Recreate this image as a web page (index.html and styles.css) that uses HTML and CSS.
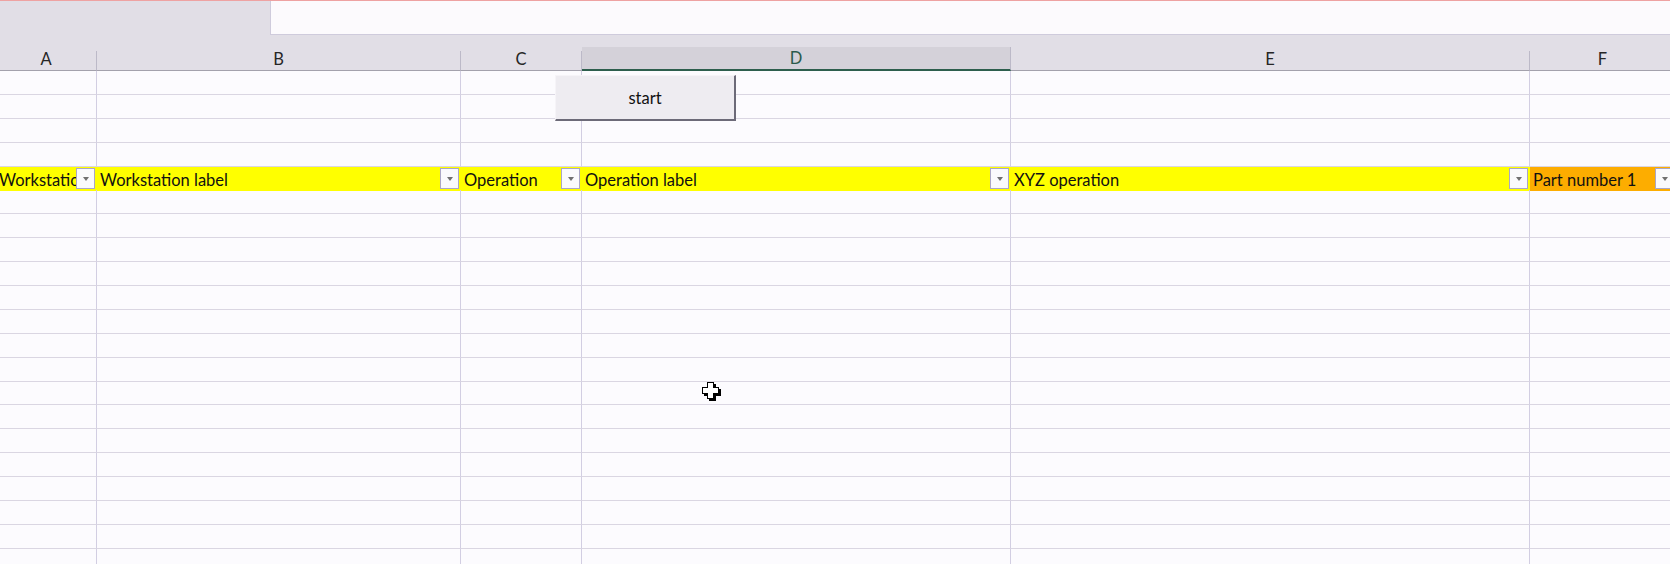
FILE: index.html
```html
<!DOCTYPE html>
<html>
<head>
<meta charset="utf-8">
<link rel="stylesheet" href="styles.css">
</head>
<body>
<div class="app">
  <div class="topbar">
    <div class="namebox"></div>
    <div class="formula"></div>
  </div>
  <div class="sheet">
    <div class="cols colheads">
      <div class="ch">A</div>
      <div class="ch">B</div>
      <div class="ch">C</div>
      <div class="ch sel">D</div>
      <div class="ch">E</div>
      <div class="ch">F</div>
    </div>
    <div class="body">
      <div class="cols row"><div class="c"></div><div class="c"></div><div class="c"></div><div class="c"></div><div class="c"></div><div class="c"></div></div>
      <div class="cols row"><div class="c"></div><div class="c"></div><div class="c"></div><div class="c"></div><div class="c"></div><div class="c"></div></div>
      <div class="cols row"><div class="c"></div><div class="c"></div><div class="c"></div><div class="c"></div><div class="c"></div><div class="c"></div></div>
      <div class="cols row"><div class="c"></div><div class="c"></div><div class="c"></div><div class="c"></div><div class="c"></div><div class="c"></div></div>
      <div class="cols row hrow">
        <div class="c hc"><span class="t">Workstation</span><span class="fb"></span></div>
        <div class="c hc"><span class="t">Workstation label</span><span class="fb"></span></div>
        <div class="c hc"><span class="t">Operation</span><span class="fb"></span></div>
        <div class="c hc"><span class="t">Operation label</span><span class="fb"></span></div>
        <div class="c hc"><span class="t">XYZ operation</span><span class="fb"></span></div>
        <div class="c hc orange"><span class="t">Part number 1</span><span class="fb"></span></div>
      </div>
      <div class="cols row"><div class="c"></div><div class="c"></div><div class="c"></div><div class="c"></div><div class="c"></div><div class="c"></div></div>
      <div class="cols row"><div class="c"></div><div class="c"></div><div class="c"></div><div class="c"></div><div class="c"></div><div class="c"></div></div>
      <div class="cols row"><div class="c"></div><div class="c"></div><div class="c"></div><div class="c"></div><div class="c"></div><div class="c"></div></div>
      <div class="cols row"><div class="c"></div><div class="c"></div><div class="c"></div><div class="c"></div><div class="c"></div><div class="c"></div></div>
      <div class="cols row"><div class="c"></div><div class="c"></div><div class="c"></div><div class="c"></div><div class="c"></div><div class="c"></div></div>
      <div class="cols row"><div class="c"></div><div class="c"></div><div class="c"></div><div class="c"></div><div class="c"></div><div class="c"></div></div>
      <div class="cols row"><div class="c"></div><div class="c"></div><div class="c"></div><div class="c"></div><div class="c"></div><div class="c"></div></div>
      <div class="cols row"><div class="c"></div><div class="c"></div><div class="c"></div><div class="c"></div><div class="c"></div><div class="c"></div></div>
      <div class="cols row"><div class="c"></div><div class="c"></div><div class="c"></div><div class="c"></div><div class="c"></div><div class="c"></div></div>
      <div class="cols row"><div class="c"></div><div class="c"></div><div class="c"></div><div class="c"></div><div class="c"></div><div class="c"></div></div>
      <div class="cols row"><div class="c"></div><div class="c"></div><div class="c"></div><div class="c"></div><div class="c"></div><div class="c"></div></div>
      <div class="cols row"><div class="c"></div><div class="c"></div><div class="c"></div><div class="c"></div><div class="c"></div><div class="c"></div></div>
      <div class="cols row"><div class="c"></div><div class="c"></div><div class="c"></div><div class="c"></div><div class="c"></div><div class="c"></div></div>
      <div class="cols row"><div class="c"></div><div class="c"></div><div class="c"></div><div class="c"></div><div class="c"></div><div class="c"></div></div>
      <div class="cols row"><div class="c"></div><div class="c"></div><div class="c"></div><div class="c"></div><div class="c"></div><div class="c"></div></div>
      <div class="cols row"><div class="c"></div><div class="c"></div><div class="c"></div><div class="c"></div><div class="c"></div><div class="c"></div></div>
    </div>
  </div>
  <button class="startbtn">start</button>
  <svg class="cursor" width="19" height="19" viewBox="0 0 19 19" shape-rendering="crispEdges">
    <path d="M7 2h7v5h5v7h-5v5h-7v-5h-5v-7h5z" fill="#000"/>
    <path d="M5 0h7v5h5v7h-5v5h-7v-5h-5v-7h5z" fill="#000"/>
    <path d="M6 1h5v5h5v5h-5v5h-5v-5h-5v-5h5z" fill="#fff"/>
  </svg>
</div>
</body>
</html>
```

FILE: styles.css
```css
html, body {
  margin: 0;
  padding: 0;
  height: 100%;
  overflow: hidden;
  background: #fcfbfe;
  font-family: Lato, "Liberation Sans", sans-serif;
}

.app {
  position: relative;
  width: 1670px;
  height: 564px;
  overflow: hidden;
}

.topbar {
  height: 35px;
  box-sizing: border-box;
  display: flex;
  border-top: 1px solid #eea2a2;
  background: #e1dee6;
}

.namebox {
  width: 270px;
}

.formula {
  flex: 1;
  background: #fcfafd;
  border-left: 1px solid #cfcbdc;
  border-bottom: 1px solid #cfcbdc;
}

.sheet {
  margin-left: -4px;
  width: 1740px;
}

.cols {
  display: grid;
  grid-template-columns: 101px 364px 121px 429px 519px 146px;
}

.colheads {
  height: 36px;
  background: #e1dee6;
  align-items: end;
}

.ch {
  height: 20px;
  box-sizing: border-box;
  border-bottom: 1px solid #a3a1ac;
  border-right: 1px solid #bcb9c8;
  text-align: center;
  font-size: 16.5px;
  line-height: 17px;
  color: #262626;
}

.ch.sel {
  height: 24px;
  background: #d4d1d9;
  border-bottom: 2px solid #2d5e4d;
  color: #2a5a4c;
  line-height: 22px;
}

.row {
  height: 23.9px;
}

.c {
  box-sizing: border-box;
  border-right: 1px solid #d2cee2;
  border-bottom: 1px solid #dad6e2;
}

.hrow .c {
  background: #ffff00;
  border-right-color: #ffff00;
  border-bottom-color: #ffff00;
}

.hrow .c.orange {
  background: #fdad00;
  border-right-color: #fdad00;
  border-bottom-color: #fdad00;
}

.hc {
  display: flex;
  align-items: center;
  padding-left: 3px;
  padding-right: 1px;
  font-size: 16.5px;
  color: #111;
}

.hc .t {
  flex: 1;
  min-width: 0;
  overflow: hidden;
  white-space: nowrap;
  padding-top: 3px;
}

.fb {
  flex: none;
  width: 19px;
  height: 21px;
  margin-top: 1px;
  box-sizing: border-box;
  border: 1px solid #aaa6c6;
  background: #fafafc;
  display: flex;
  align-items: center;
  justify-content: center;
}

.fb::after {
  content: "";
  display: block;
  border-left: 3.5px solid transparent;
  border-right: 3.5px solid transparent;
  border-top: 4px solid #707070;
}

.startbtn {
  position: absolute;
  left: 555px;
  top: 75px;
  width: 181px;
  height: 46px;
  box-sizing: border-box;
  margin: 0;
  padding: 0;
  background: #eeecf1;
  border-top: 1px solid #f6f4f8;
  border-left: 1px solid #f6f4f8;
  border-right: 2px solid #6c6a78;
  border-bottom: 2px solid #6c6a78;
  font-family: Lato, "Liberation Sans", sans-serif;
  font-size: 16.5px;
  color: #111;
}

.cursor {
  position: absolute;
  left: 702px;
  top: 382px;
}
```
